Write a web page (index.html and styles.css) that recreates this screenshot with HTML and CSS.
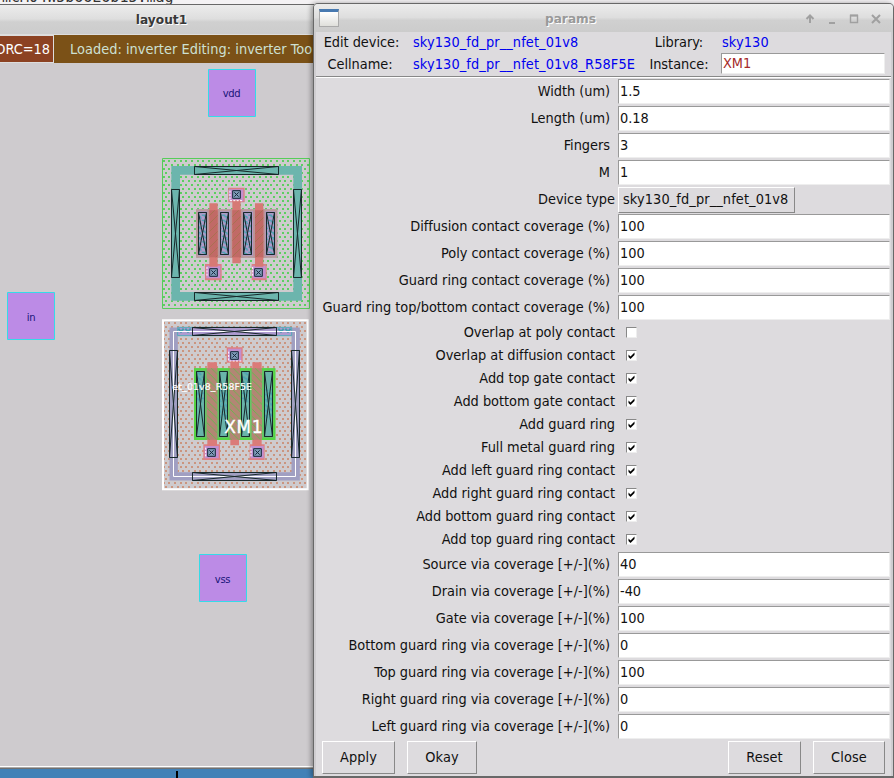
FILE: index.html
```
<!DOCTYPE html>
<html lang="en">
<head>
<meta charset="utf-8">
<title>params</title>
<link rel="stylesheet" href="styles.css">
</head>
<body>
<div class="terminal">mcM04W5b66E6b15.mag</div>

<section class="layout-win">
  <h1 class="titlebar layout-title">layout1</h1>
  <div class="status"><span class="drc">DRC=18</span><span class="status-text">Loaded: inverter Editing: inverter Too</span></div>
  <svg class="canvas" width="314" height="703" viewBox="0 63 314 703">
    <defs>
      <pattern id="greenDots" x="6" y="6" width="51" height="24" patternUnits="userSpaceOnUse"><path d="M0 0h6v6H0zM18 0h6v6h-6zM33 0h6v6h-6zM9 12h6v6H9zM24 12h6v6h-6zM42 12h6v6h-6z" fill="#5ccf60"/></pattern>
      <pattern id="tanDots" x="6" y="6" width="51" height="24" patternUnits="userSpaceOnUse"><path d="M0 0h6v6H0zM18 0h6v6h-6zM33 0h6v6h-6zM9 12h6v6H9zM24 12h6v6h-6zM42 12h6v6h-6z" fill="#cb957f"/></pattern>
      <pattern id="polyHatch" width="24" height="24" patternUnits="userSpaceOnUse"><path d="M-2 26L26 -2" stroke="#a5714d" stroke-width="2.5"/></pattern>
      <pattern id="greenHatch" width="22" height="22" patternUnits="userSpaceOnUse"><path d="M-2 -2L24 24" stroke="#5abf48" stroke-width="2.5"/></pattern>
      <pattern id="tealHatch" width="20" height="16" patternUnits="userSpaceOnUse"><path d="M0 3h9v4h6v5h5" fill="none" stroke="#4ba2b3" stroke-width="4"/></pattern>
      <g id="via"><path d="M0 0h25v25H0z" fill="#7f9cb9"/><path d="M1 1h23v23H1zM6 6l13 13M19 6L6 19" fill="none" stroke="#17283c" stroke-width="3"/></g>
    </defs>

    <g class="pad"><path d="M208.500 69.500h47v47h-47z"/><text x="231.500" y="97">vdd</text></g>
    <g class="pad"><path d="M7.500 292.500h47v47h-47z"/><text x="31" y="320.500">in</text></g>
    <g class="pad"><path d="M199.500 554.500h47v47h-47z"/><text x="222.500" y="582.500">vss</text></g>

    <g transform="translate(155 150) scale(.333333)">
      <path d="M22.500 25.500h441v450h-441z" fill="url(#greenDots)" stroke="#55cd58" stroke-width="3"/>
      <path d="M62 61h366v378H62z" fill="none" stroke="#6cb5ad" stroke-width="26"/>
      <g class="contact">
        <path d="M118.500 49.500h252v24h-252zl252 24M118.500 73.500l252-24"/>
        <path d="M118.500 427.500h252v24h-252zl252 24M118.500 451.500l252-24"/>
        <path d="M49.500 118.500h24v264h-24zl24 264M49.500 382.500l24-264"/>
        <path d="M415.500 118.500h24v264h-24zl24 264M415.500 382.500l24-264"/>
      </g>
      <path d="M123 178h244v145H123z" fill="#b29aca"/>
      <path d="M126 181h238v139H126z" fill="none" stroke="#bb9c9c" stroke-width="6"/>
      <path d="M157 178h37v145h-37zM226 178h37v145h-37zM294 178h37v145h-37z" fill="#bb9599"/>
      <path d="M220 113h49v44h-49zM150 342h50v49h-50zM290 342h45v49h-45z" fill="#dc7f83"/>
      <path d="M222 118h43v36h-43zM154 347h42v38h-42zM292 347h40v38h-40z" fill="#c58fce"/>
      <path d="M163 160h25v190h-25zM232 151h25v189h-25zM300 160h25v190h-25z" fill="#d67975"/>
      <path d="M163 181h25v141h-25zM232 181h25v141h-25zM300 181h25v141h-25z" fill="#c16a66"/>
      <path d="M163 181h25v141h-25zM232 181h25v141h-25zM300 181h25v141h-25z" fill="url(#polyHatch)"/>
      <path d="M130 187h25v127h-25zM196 187h25v127h-25zM265 187h25v127h-25zM334 187h25v127h-25z" fill="url(#tealHatch)"/>
      <g class="contact clear">
        <path d="M130.500 187.500h24v126h-24zl24 126M130.500 313.500l24-126"/>
        <path d="M196.500 187.500h24v126h-24zl24 126M196.500 313.500l24-126"/>
        <path d="M265.500 187.500h24v126h-24zl24 126M265.500 313.500l24-126"/>
        <path d="M334.500 187.500h24v126h-24zl24 126M334.500 313.500l24-126"/>
      </g>
      <path class="dash" d="M225 122v30h40M156 351v30M293 351v30"/>
      <use href="#via" x="232" y="121"/><use href="#via" x="163" y="355"/><use href="#via" x="298" y="355"/>
    </g>

    <g transform="translate(155 312) scale(.333333)">
      <path d="M23 24h436v509H23z" fill="url(#tanDots)"/>
      <path d="M56 59h366v434H56z" fill="none" stroke="#a09fc2" stroke-width="25"/>
      <path d="M68 46h342v25H68z" fill="#ad9bd0"/>
      <path d="M68 46h342v25H68z" fill="none" stroke="#55acba" stroke-width="3"/>
      <path d="M70 50l8 9 8-9M91 50l8 9 8-9M370 50l8 9 8-9M391 50l8 9 8-9" fill="none" stroke="#439dad" stroke-width="6"/>
      <path d="M55.500 58.500h366v435h-366z" fill="none" stroke="#fff" stroke-width="3"/>
      <g class="contact clear">
        <path d="M112.500 46.500h252v24h-252zl252 24M112.500 70.500l252-24"/>
        <path d="M112.500 481.500h252v24h-252zl252 24M112.500 505.500l252-24"/>
        <path d="M43.500 115.500h24v321h-24zl24 321M43.500 436.500l24-321"/>
        <path d="M409.500 115.500h24v321h-24zl24 321M409.500 436.500l24-321"/>
      </g>
      <path d="M117 169h244v215H117z" fill="#64c665"/>
      <path d="M120 172h238v209H120z" fill="none" stroke="#55d544" stroke-width="6"/>
      <path d="M215 106h48v46h-48zM145 397h50v47h-50zM284 397h45v47h-45z" fill="#df7f84"/>
      <path d="M219 110h40v37h-40zM149 402h42v37h-42zM287 402h39v37h-39z" fill="#c18fd0"/>
      <path d="M157 151h29v250h-29zM226 148h26v252h-26zM292 151h28v250h-28z" fill="#db7b79"/>
      <path d="M155 169h32v214h-32zM224 169h31v214h-31zM290 169h31v214h-31z" fill="#b38674"/>
      <path d="M155 169h32v214h-32zM224 169h31v214h-31zM290 169h31v214h-31z" fill="url(#greenHatch)"/>
      <path d="M124 178h25v195h-25zM193 178h25v195h-25zM259 178h25v195h-25zM328 178h25v195h-25z" fill="#69b4aa"/>
      <path d="M124 180h25v92h-25zM193 232h25v90h-25zM259 180h25v92h-25zM328 232h25v90h-25z" fill="url(#tealHatch)"/>
      <g class="contact clear">
        <path d="M124.500 178.500h24v195h-24zl24 195M124.500 373.500l24-195"/>
        <path d="M193.500 178.500h24v195h-24zl24 195M193.500 373.500l24-195"/>
        <path d="M259.500 178.500h24v195h-24zl24 195M259.500 373.500l24-195"/>
        <path d="M328.500 178.500h24v195h-24zl24 195M328.500 373.500l24-195"/>
      </g>
      <path class="dash" d="M221 119v28h38M152 407v29M288 407v29"/>
      <use href="#via" x="226" y="118"/><use href="#via" x="157" y="409"/><use href="#via" x="295" y="409"/>
      <path d="M24 25h434v507H24z" fill="none" stroke="#fff" stroke-width="6"/>
      <text class="cell-name" x="52" y="234" textLength="239">et_01v8_R58F5E</text>
      <text class="inst-name" x="208" y="362" textLength="115">XM1</text>
    </g>
  </svg>
</section>
<div class="taskbar"><i></i></div>

<section class="params">
  <header class="titlebar params-title">
    <span class="app-icon"></span>
    <h2>params</h2>
    <svg width="80" height="16" viewBox="0 0 80 16" fill="none" stroke="#a0a0a0" stroke-width="2">
      <path d="M7 13V6M3.500 9L7 5.500 10.500 9"/><path d="M26 13h6"/><path d="M47.500 5.500h7v7h-7z" stroke-width="1.400"/><path d="M47 5.500h8"/><path d="M69 5l8 8M77 5l-8 8"/>
    </svg>
  </header>
  <div class="head">
    <span>Edit device:</span><b>sky130_fd_pr__nfet_01v8</b><span>Library:</span><b class="library">sky130</b>
    <span>Cellname:</span><b>sky130_fd_pr__nfet_01v8_R58F5E</b><span>Instance:</span><span class="instance">XM1</span>
  </div>
  <div class="rows">
    <div class="row"><label>Width (um)</label><span class="entry">1.5</span></div>
    <div class="row"><label>Length (um)</label><span class="entry">0.18</span></div>
    <div class="row"><label>Fingers</label><span class="entry">3</span></div>
    <div class="row"><label>M</label><span class="entry">1</span></div>
    <div class="row wide"><label>Device type</label><span class="menu">sky130_fd_pr__nfet_01v8</span></div>
    <div class="row"><label>Diffusion contact coverage (%)</label><span class="entry">100</span></div>
    <div class="row"><label>Poly contact coverage (%)</label><span class="entry">100</span></div>
    <div class="row"><label>Guard ring contact coverage (%)</label><span class="entry">100</span></div>
    <div class="row"><label>Guard ring top/bottom contact coverage (%)</label><span class="entry">100</span></div>
    <div class="row check"><label>Overlap at poly contact</label><span class="box"></span></div>
    <div class="row check"><label>Overlap at diffusion contact</label><span class="box"><svg viewBox="0 0 9 9"><path d="M1.500 3.500v2.500L3.500 8l4-4V1.500l-4 4z"/></svg></span></div>
    <div class="row check"><label>Add top gate contact</label><span class="box"><svg viewBox="0 0 9 9"><path d="M1.500 3.500v2.500L3.500 8l4-4V1.500l-4 4z"/></svg></span></div>
    <div class="row check"><label>Add bottom gate contact</label><span class="box"><svg viewBox="0 0 9 9"><path d="M1.500 3.500v2.500L3.500 8l4-4V1.500l-4 4z"/></svg></span></div>
    <div class="row check"><label>Add guard ring</label><span class="box"><svg viewBox="0 0 9 9"><path d="M1.500 3.500v2.500L3.500 8l4-4V1.500l-4 4z"/></svg></span></div>
    <div class="row check"><label>Full metal guard ring</label><span class="box"><svg viewBox="0 0 9 9"><path d="M1.500 3.500v2.500L3.500 8l4-4V1.500l-4 4z"/></svg></span></div>
    <div class="row check"><label>Add left guard ring contact</label><span class="box"><svg viewBox="0 0 9 9"><path d="M1.500 3.500v2.500L3.500 8l4-4V1.500l-4 4z"/></svg></span></div>
    <div class="row check"><label>Add right guard ring contact</label><span class="box"><svg viewBox="0 0 9 9"><path d="M1.500 3.500v2.500L3.500 8l4-4V1.500l-4 4z"/></svg></span></div>
    <div class="row check"><label>Add bottom guard ring contact</label><span class="box"><svg viewBox="0 0 9 9"><path d="M1.500 3.500v2.500L3.500 8l4-4V1.500l-4 4z"/></svg></span></div>
    <div class="row check"><label>Add top guard ring contact</label><span class="box"><svg viewBox="0 0 9 9"><path d="M1.500 3.500v2.500L3.500 8l4-4V1.500l-4 4z"/></svg></span></div>
    <div class="row"><label>Source via coverage [+/-](%)</label><span class="entry">40</span></div>
    <div class="row"><label>Drain via coverage [+/-](%)</label><span class="entry">-40</span></div>
    <div class="row"><label>Gate via coverage [+/-](%)</label><span class="entry">100</span></div>
    <div class="row"><label>Bottom guard ring via coverage [+/-](%)</label><span class="entry">0</span></div>
    <div class="row"><label>Top guard ring via coverage [+/-](%)</label><span class="entry">100</span></div>
    <div class="row"><label>Right guard ring via coverage [+/-](%)</label><span class="entry">0</span></div>
    <div class="row"><label>Left guard ring via coverage [+/-](%)</label><span class="entry">0</span></div>
  </div>
  <footer class="buttons">
    <button class="apply">Apply</button><button class="okay">Okay</button><button class="reset">Reset</button><button class="close">Close</button>
  </footer>
</section>
</body>
</html>
```
FILE: styles.css
```
* { box-sizing: border-box; }
body {
  position: relative;
  width: 894px;
  height: 778px;
  margin: 0;
  overflow: hidden;
  background: #f4f2f4;
  color: #111;
  font-family: "DejaVu Sans Condensed", "DejaVu Sans", sans-serif;
  font-size: 14.4px;
  letter-spacing: -0.03px;
}
h1, h2 { margin: 0; font: bold 13px "DejaVu Sans", sans-serif; letter-spacing: 0; }

.terminal {
  height: 5px;
  padding-left: 2px;
  font: 15px/15px "DejaVu Sans Mono", monospace;
  letter-spacing: 0;
  color: #333;
  display: flex;
  align-items: flex-end;
}
.titlebar { background: linear-gradient(#ececec, #dedede 48%, #d0d0d0 58%, #cccccc); }

.layout-win {
  position: absolute;
  left: 0; top: 4px;
  width: 314px;
  height: 764px;
  border-top: 1px solid #686868;
  background: #cecbce;
}
.layout-title {
  height: 29px;
  padding-left: 9px;
  line-height: 30px;
  text-align: center;
  font-size: 12.2px;
  color: #383838;
  text-shadow: 1px 1px #fff;
}
.status {
  display: flex;
  height: 29px;
  border-top: 1px solid #ddd;
  background: #7b5117;
  line-height: 26px;
  white-space: nowrap;
}
.drc {
  width: 54px;
  padding-right: 3px;
  display: flex;
  justify-content: flex-end;
  height: 28px;
  border: solid #ddd;
  border-width: 1px 1px 1px 0;
  background: #8c4222;
  color: #fff;
}
.status-text { margin-left: 16px; padding-top: 1px; color: #cde0d2; letter-spacing: 0.03px; }
.canvas { display: block; height: 703px; }
.pad path { fill: #bc8be6; stroke: #35dbe8; }
.pad text { font: 10px "DejaVu Sans", sans-serif; letter-spacing: -0.3px; text-anchor: middle; fill: #191579; }
.contact { fill: #6cb5ad; stroke: #17282a; stroke-width: 3; }
.contact.clear { fill: none; }
.dash { fill: none; stroke: #fff; stroke-width: 3; stroke-dasharray: 6 4; }
.cell-name { font: 28px "DejaVu Sans", sans-serif; letter-spacing: 0; fill: #fff; stroke: #fff; stroke-width: 0.6; }
.inst-name { font: 51px "DejaVu Sans", sans-serif; letter-spacing: 0; fill: #fff; stroke: #fff; stroke-width: 1; }

.taskbar {
  position: absolute;
  left: 0; top: 766px;
  width: 314px;
  height: 12px;
  padding-left: 176px;
  border-top: 1px solid #fff;
  background: linear-gradient(#aaa 0 1px, #707070 1px 2px, #4281b7 2px);
}
.taskbar i { display: block; width: 2px; height: 7px; margin-top: 4px; background: #000; }

.params {
  position: absolute;
  left: 313px; top: 3px;
  width: 581px;
  height: 775px;
  border: 1px solid #686868;
  border-bottom-width: 2px;
  border-radius: 5px 5px 0 0;
  background: #dddbde;
  box-shadow: -2px 0 5px #0005, inset -2px 0 #cfcdd0, inset 2px 0 #cfcdd0;
  overflow: hidden;
}
.params-title { display: flex; align-items: center; height: 28px; padding: 0 10px 0 5px; }
.params-title h2 { flex: 1; text-align: center; padding-right: 1px; padding-top: 2px; font-size: 12.2px; color: #999; text-shadow: 1px 1px #fff; }
.app-icon { width: 20px; height: 18px; border: 1px solid #aaa; border-top: 3px solid #4779b0; background: linear-gradient(#fff, #dfdfdb); }
.head {
  display: grid;
  grid-template-columns: 94px 231px 79px 168px;
  grid-template-rows: 20px 23px;
  align-items: center;
  height: 45px;
  margin: 0 2px 1px;
  padding-left: 1px;
  border-bottom: 1px solid #888;
  box-shadow: 0 1px #fff;
}
.head span { text-align: center; padding-right: 5px; }
.head span:nth-child(5) { padding-right: 8px; }
.head b { font-weight: normal; color: #0000f0; padding-left: 2px; white-space: nowrap; letter-spacing: 0.11px; }
.head .library { padding-left: 1px; }
.head .instance {
  width: 164px;
  height: 21px;
  padding: 0 0 0 1px;
  border: 1px solid #999;
  border-right-color: #eee;
  border-bottom-color: #eee;
  background: #fff;
  color: #a52a2a;
  line-height: 19px;
  text-align: left;
}
.row { display: flex; align-items: flex-start; height: 27px; padding: 1px 3px 0 0; line-height: 25px; }
.row label { width: 304px; padding-right: 8px; text-align: right; white-space: nowrap; }
.row.wide label, .check label { padding-right: 3px; }
.entry {
  flex: 1;
  height: 25px;
  padding-left: 1px;
  border: 1px solid #999;
  border-right-color: #eee;
  border-bottom-color: #eee;
  background: #fff;
  line-height: 23px;
}
.menu { width: 177px; height: 26px; padding: 0 4px; border: 1px solid #fff; border-right-color: #888; border-bottom-color: #888; line-height: 23px; letter-spacing: 0.11px; }
.row.check { height: 23px; padding-top: 0; line-height: 22px; }
.box { width: 11px; height: 11px; margin: 6px 0 0 8px; border: 1px solid #888; border-right-color: #eee; border-bottom-color: #eee; background: #fff; }
.box svg { display: block; width: 9px; height: 9px; }
.buttons { display: flex; padding: 1px 8px 0 8px; }
.buttons button {
  height: 33px;
  padding: 0 0 1px;
  border: 1px solid #fff;
  border-right-color: #888;
  border-bottom-color: #888;
  border-radius: 0;
  background: #dddbde;
  color: #111;
  font: inherit;
  letter-spacing: 0.1px;
}
.apply, .reset { width: 73px; }
.close { width: 72px; }
.okay { width: 70px; margin-left: 12px; }
.reset { margin-left: auto; margin-right: 12px; }
```
